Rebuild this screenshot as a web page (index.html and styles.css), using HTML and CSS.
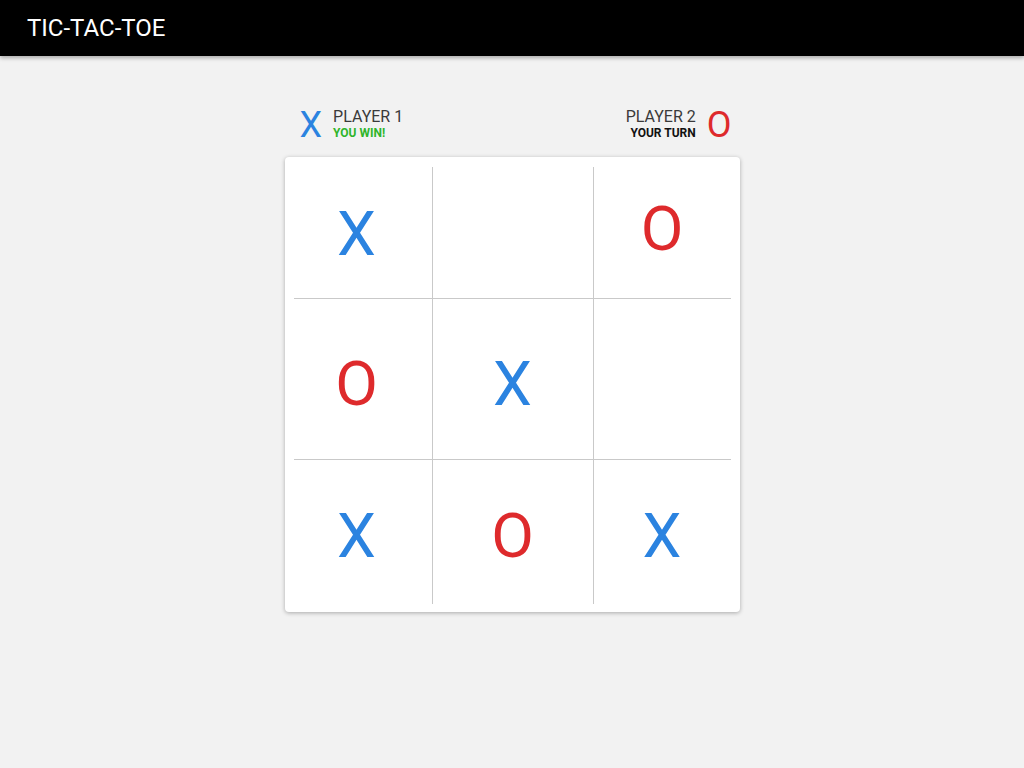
FILE: index.html
```html
<!DOCTYPE html>
<html>
<head>
<meta charset="utf-8">
<title>Tic-Tac-Toe</title>
<link rel="stylesheet" href="styles.css">
</head>
<body>
<header class="appbar"><h1 class="title">TIC-TAC-TOE</h1></header>
<main class="game">
  <div class="players">
    <div class="player">
      <span class="mark-small x">X</span>
      <div class="pinfo">
        <div class="pname">PLAYER 1</div>
        <div class="pstatus win">YOU WIN!</div>
      </div>
    </div>
    <div class="player right">
      <div class="pinfo">
        <div class="pname">PLAYER 2</div>
        <div class="pstatus turn">YOUR TURN</div>
      </div>
      <span class="mark-small o">O</span>
    </div>
  </div>
  <div class="card">
    <div class="board">
      <div class="cell r0 c0"><span class="x">X</span></div>
      <div class="cell r0 c1"></div>
      <div class="cell r0 c2"><span class="o raised">O</span></div>
      <div class="cell r1 c0"><span class="o">O</span></div>
      <div class="cell r1 c1"><span class="x">X</span></div>
      <div class="cell r1 c2"></div>
      <div class="cell r2 c0"><span class="x">X</span></div>
      <div class="cell r2 c1"><span class="o">O</span></div>
      <div class="cell r2 c2"><span class="x">X</span></div>
    </div>
  </div>
</main>
</body>
</html>
```
FILE: styles.css
```css
* { box-sizing: border-box; }
html, body { margin: 0; padding: 0; }
body {
  background: #f2f2f2;
  font-family: Roboto, "Liberation Sans", sans-serif;
  height: 768px;
}
.appbar {
  height: 56px;
  background: #000;
  box-shadow: 0 2px 4px rgba(0,0,0,0.3);
  padding-left: 27px;
  display: flex;
  align-items: center;
}
.title {
  margin: 0;
  color: #fff;
  font-size: 24px;
  font-weight: 400;
}
.game {
  width: 455px;
  margin: 0 auto;
  padding-top: 48px;
}
.players {
  display: flex;
  justify-content: space-between;
  align-items: center;
  padding: 0 8px 0 15px;
  height: 42px;
  margin-bottom: 11px;
}
.player { display: flex; align-items: center; gap: 11px; }
.player.right { text-align: right; gap: 11px; }
.pinfo { margin-top: -2px; }
.mark-small { font-size: 36px; line-height: 36px; }
.x { color: #2b83e0; }
.o { color: #de2a2c; }
.pname { font-size: 16px; color: #3a3a3a; line-height: 18px; }
.pstatus { font-size: 12px; font-weight: 700; line-height: 14px; }
.win { color: #2fb52a; }
.turn { color: #111; }
.card {
  background: #fff;
  border-radius: 4px;
  box-shadow: 0 1px 4px rgba(0,0,0,0.3);
  padding: 10px 9px 8px 9px;
}
.board {
  display: grid;
  grid-template-columns: 138px 161px 138px;
  grid-template-rows: 131px 161px 145px;
}
.cell {
  display: flex;
  align-items: center;
  justify-content: center;
  font-size: 62px;
  line-height: 1;
}
.c1, .c2 { border-left: 1px solid #c9c9c9; }
.r1, .r2 { border-top: 1px solid #c9c9c9; }
.c0 { padding-right: 12px; }
.r0 { padding-top: 2px; }
.r1 { padding-top: 10px; }
.r2 { padding-top: 8px; }
.raised { position: relative; top: -5px; }
```
